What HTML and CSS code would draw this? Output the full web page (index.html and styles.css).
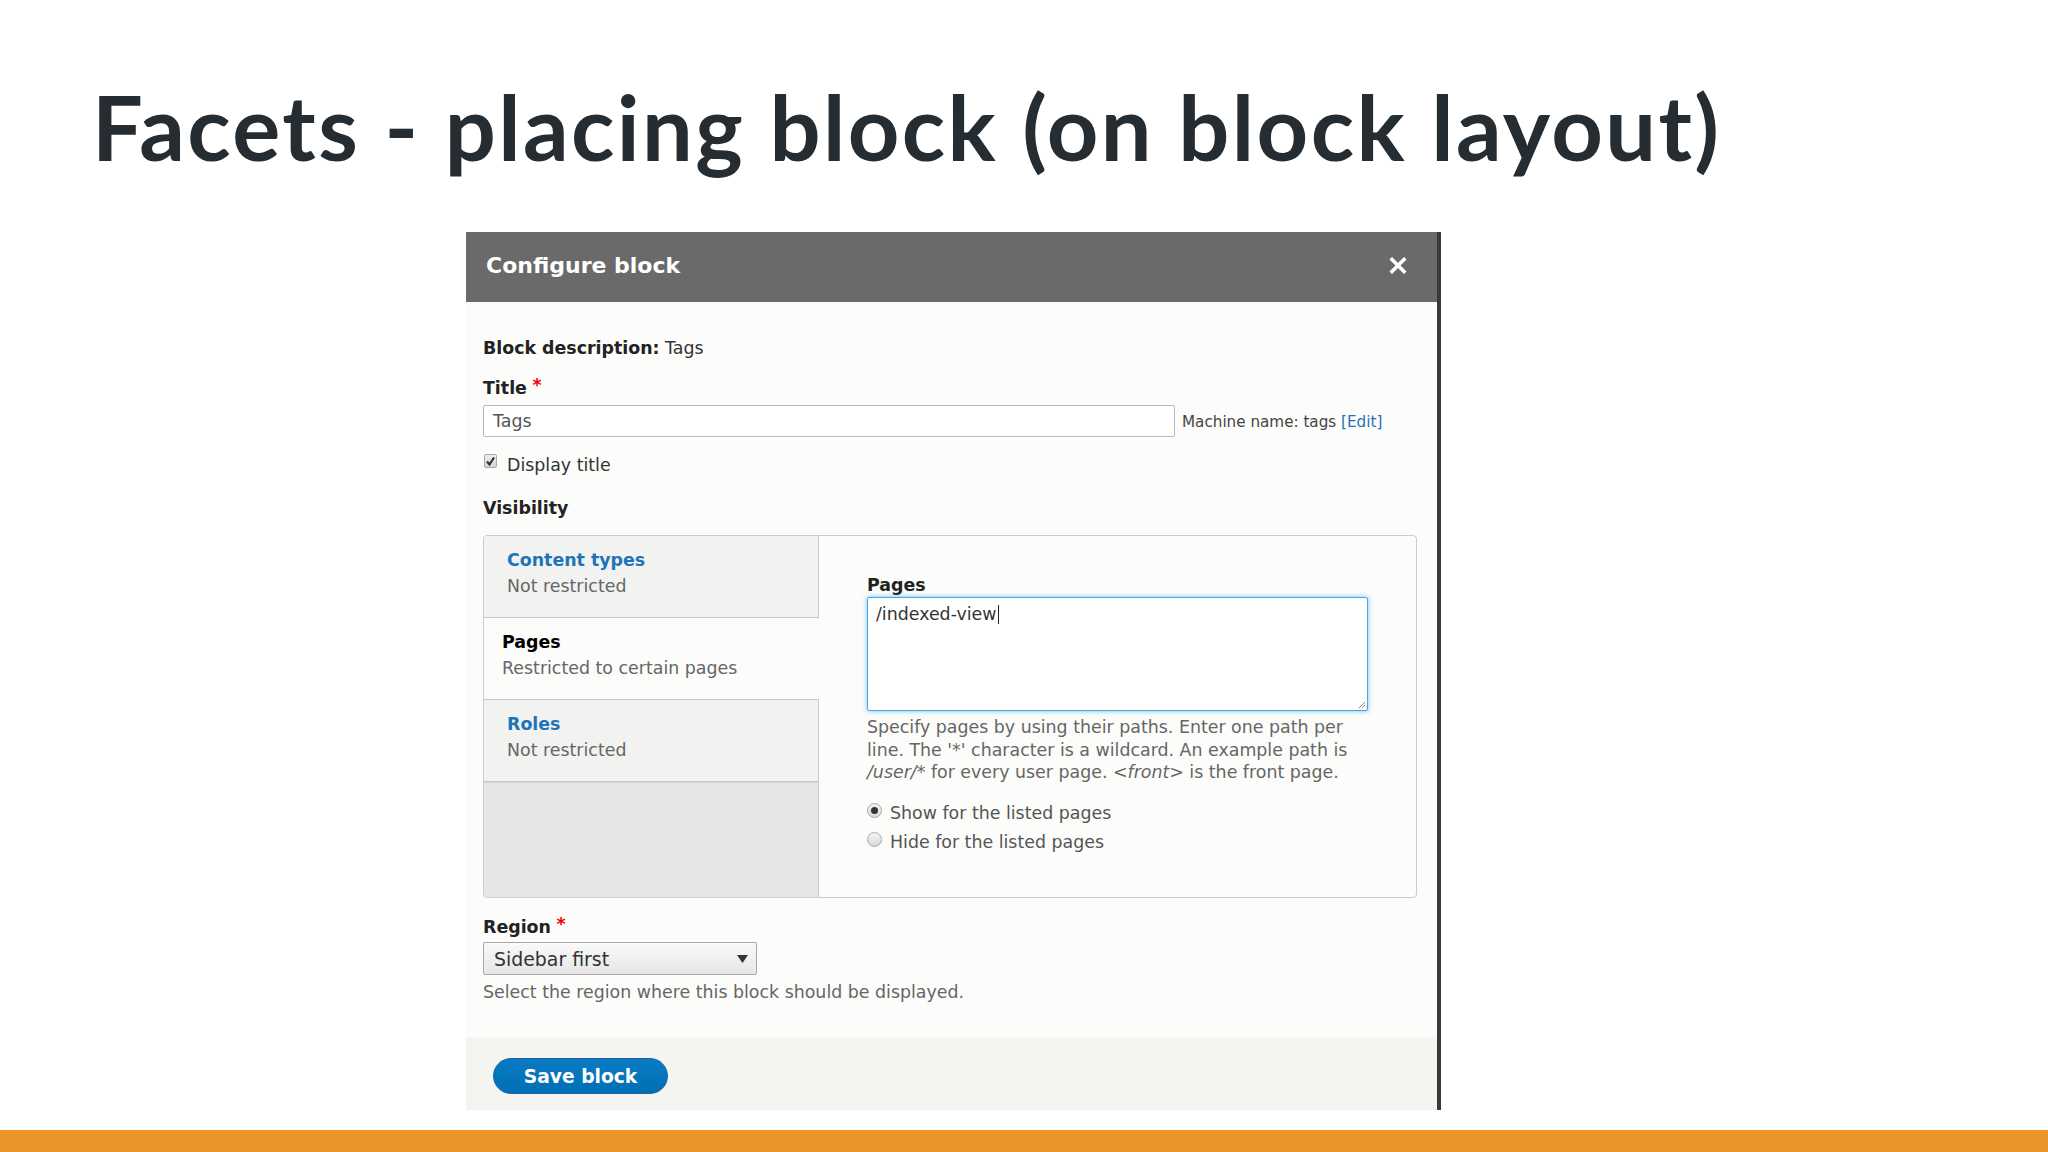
FILE: index.html
```html
<!DOCTYPE html>
<html>
<head>
	<meta charset="utf-8">
	<title>Facets - placing block</title>
	<link rel="stylesheet" href="styles.css">
</head>
<body>
	<div class="slide">
		<h1 class="slide-title">Facets - placing block (on block layout)</h1>

		<div class="dialog">
			<div class="dialog-head">
				<span class="dialog-title">Configure block</span>
				<svg class="dialog-close" width="18" height="17" viewBox="0 0 18 17">
					<path d="M3 2.5 L15 14.5 M15 2.5 L3 14.5" stroke="#fff" stroke-width="3.6" stroke-linecap="square"/>
				</svg>
			</div>

			<div class="dialog-body">
				<div class="line"><span class="lbl">Block description:</span> Tags</div>

				<div class="line label-title"><span class="lbl">Title</span> <span class="req">*</span></div>
				<div class="input-row">
					<div class="text-input">Tags</div>
					<span class="machine">Machine name: tags <a class="link">[Edit]</a></span>
				</div>

				<div class="line check-row">
					<span class="checkbox">
						<svg width="11" height="11" viewBox="0 0 11 11"><path d="M2 5.5 L4.5 8.5 L9 1.5" stroke="#333" stroke-width="2.2" fill="none"/></svg>
					</span>
					<span>Display title</span>
				</div>

				<div class="line label-vis"><span class="lbl">Visibility</span></div>

				<div class="vtabs">
					<ul class="vtabs-menu">
						<li class="vtab">
							<div class="vtab-name">Content types</div>
							<div class="vtab-summary">Not restricted</div>
						</li>
						<li class="vtab selected">
							<div class="vtab-name">Pages</div>
							<div class="vtab-summary">Restricted to certain pages</div>
						</li>
						<li class="vtab">
							<div class="vtab-name">Roles</div>
							<div class="vtab-summary">Not restricted</div>
						</li>
					</ul>
					<div class="vtabs-pane">
						<div class="line"><span class="lbl">Pages</span></div>
						<div class="textarea">
							<span>/indexed-view</span><span class="caret"></span>
							<svg class="grip" width="9" height="9" viewBox="0 0 9 9">
								<path d="M8 2 L2 8 M8 5 L5 8" stroke="#888" stroke-width="1"/>
							</svg>
						</div>
						<div class="help pages-help">Specify pages by using their paths. Enter one path per line. The '*' character is a wildcard. An example path is <em>/user/*</em> for every user page. <em>&lt;front&gt;</em> is the front page.</div>
						<div class="radio-row first"><span class="radio on"></span>Show for the listed pages</div>
						<div class="radio-row"><span class="radio"></span>Hide for the listed pages</div>
					</div>
				</div>

				<div class="line label-region"><span class="lbl">Region</span> <span class="req">*</span></div>
				<div class="select">
					<span>Sidebar first</span>
					<svg width="11" height="8" viewBox="0 0 11 8"><polygon points="0,0 11,0 5.5,8" fill="#333"/></svg>
				</div>
				<div class="help region-help">Select the region where this block should be displayed.</div>
			</div>

			<div class="dialog-foot">
				<button class="btn">Save block</button>
			</div>
		</div>

		<div class="bar"></div>
	</div>
</body>
</html>
```

FILE: styles.css
```css
body{
	margin: 0;
	background-color: #fff;
}
ul{
	list-style: none;
	margin: 0;
	padding: 0;
}
.slide{
	display: flex;
	flex-direction: column;
	height: 1152px;
	overflow: hidden;
}
.slide-title{
	margin: 73px 0 0 92px;
	font-family: Lato, "Open Sans", sans-serif;
	font-weight: 700;
	font-size: 90px;
	line-height: 107px;
	color: #252d33;
	letter-spacing: 2.4px;
}
.dialog{
	width: 971px;
	margin: 52px 0 0 466px;
	background-color: #fcfcfa;
	border-right: 4px solid #3a3a3a;
	font-family: "DejaVu Sans", sans-serif;
	font-size: 17.4px;
	line-height: 22px;
	color: #333;
}
.dialog-head{
	display: flex;
	align-items: center;
	justify-content: space-between;
	height: 70px;
	padding: 0 30px 0 20px;
	background-color: #6a6a6a;
}
.dialog-title{
	font-family: "DejaVu Sans", sans-serif;
	font-weight: 700;
	font-size: 22px;
	color: #fff;
	margin-top: -3px;
}
.dialog-close{
	display: block;
	margin-top: -4px;
}
.dialog-body{
	padding: 35px 20px 34px 17px;
}
.line{
	height: 22px;
}
.lbl{
	font-weight: 700;
	color: #222;
}
.req{
	color: #e00;
	font-size: 17.4px;
	font-weight: 700;
	line-height: 0;
	vertical-align: 3px;
}
.label-title{
	margin-top: 18px;
}
.input-row{
	display: flex;
	align-items: baseline;
	margin-top: 6px;
}
.text-input{
	box-sizing: border-box;
	width: 692px;
	height: 32px;
	padding: 0 9px;
	line-height: 30px;
	border: 1px solid #b8b8b8;
	border-radius: 2px;
	background-color: #fff;
	color: #555;
}
.machine{
	margin-left: 7px;
	font-size: 15.2px;
	color: #444;
}
.link{
	color: #1f74b8;
}
.check-row{
	display: flex;
	margin-top: 17px;
}
.checkbox{
	box-sizing: border-box;
	display: flex;
	align-items: center;
	justify-content: center;
	width: 13px;
	height: 14px;
	margin: 0 10px 0 1px;
	border: 1px solid #aaa;
	border-radius: 2px;
	background: linear-gradient(#eee, #d4d4d4);
}
.label-vis{
	margin-top: 21px;
}
.vtabs{
	display: flex;
	height: 363px;
	box-sizing: border-box;
	margin-top: 16px;
	border: 1px solid #ccc;
	border-radius: 4px;
	background-color: #fcfcfa;
	overflow: hidden;
}
.vtabs-menu{
	width: 334px;
	border-right: 1px solid #ccc;
	background-color: #e6e6e5;
}
.vtab{
	padding: 11px 23px 18px;
	line-height: 26px;
	background-color: #f2f2f1;
	border-bottom: 1px solid #c6c6c6;
	box-shadow: 0 1px 1px rgba(0, 0, 0, 0.06);
}
.vtab-name{
	font-weight: 700;
	color: #1f74b8;
}
.vtab-summary{
	color: #666;
}
.vtab.selected{
	position: relative;
	margin-right: -1px;
	padding-left: 18px;
	background-color: #fcfcfa;
	box-shadow: none;
}
.vtab.selected .vtab-name{
	color: #000;
}
.vtabs-pane{
	flex: 1;
	padding: 38px 48px;
}
.textarea{
	position: relative;
	box-sizing: border-box;
	height: 114px;
	margin-top: 1px;
	padding: 5px 8px;
	border: 1px solid #42a7ec;
	border-radius: 2px;
	background-color: #fff;
	box-shadow: 0 0 5px rgba(60, 170, 240, 0.7);
	color: #333;
}
.caret{
	display: inline-block;
	width: 1px;
	height: 19px;
	margin-left: 1px;
	vertical-align: -4px;
	background-color: #222;
}
.grip{
	position: absolute;
	right: 1px;
	bottom: 1px;
}
.help{
	color: #666;
}
.pages-help{
	margin-top: 5px;
	line-height: 22.5px;
}
.radio-row{
	display: flex;
	align-items: flex-start;
	margin-top: 7px;
	color: #555;
}
.radio-row.first{
	margin-top: 18px;
}
.radio{
	box-sizing: border-box;
	display: flex;
	align-items: center;
	justify-content: center;
	width: 15px;
	height: 15px;
	margin: 1px 8px 0 0;
	border: 1px solid #aaa;
	border-radius: 50%;
	background: linear-gradient(#f4f4f4, #d8d8d8);
}
.radio.on:after{
	content: "";
	width: 7px;
	height: 7px;
	border-radius: 50%;
	background-color: #333;
}
.label-region{
	margin-top: 18px;
}
.select{
	box-sizing: border-box;
	display: flex;
	align-items: center;
	justify-content: space-between;
	width: 274px;
	height: 33px;
	margin-top: 4px;
	padding: 0 8px 0 10px;
	border: 1px solid #a8a8a8;
	border-radius: 2px;
	background: linear-gradient(#fafafa, #e6e6e6);
	font-size: 18.9px;
	color: #333;
}
.region-help{
	margin-top: 6px;
}
.dialog-foot{
	padding: 21px 27px 16px;
	background-color: #f4f4f1;
}
.btn{
	display: block;
	width: 175px;
	height: 36px;
	padding: 0;
	border: 1px solid #1c64a0;
	border-radius: 20px;
	background: linear-gradient(#0a7ac4, #006fb4);
	font-family: "DejaVu Sans", sans-serif;
	font-weight: 700;
	font-size: 18.7px;
	color: #fff;
}
.bar{
	height: 22px;
	margin-top: auto;
	background-color: #e99528;
}
```
